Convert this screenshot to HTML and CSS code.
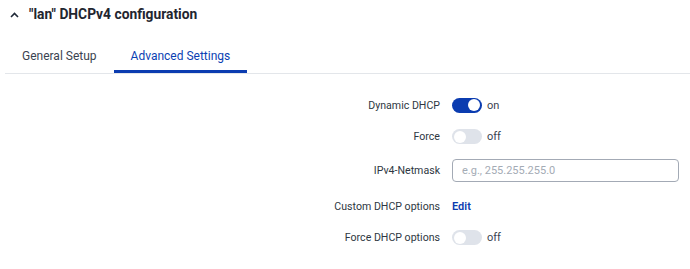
FILE: index.html
```html
<!DOCTYPE html>
<html>
<head>
<meta charset="utf-8">
<link rel="stylesheet" href="styles.css">
</head>
<body>
<div class="section">
  <div class="section-head">
    <svg class="caret" width="9" height="6" viewBox="0 0 9 6"><path d="M1 5 L4.5 1.5 L8 5" fill="none" stroke="#1f2937" stroke-width="1.6"/></svg>
    <span class="title">"lan" DHCPv4 configuration</span>
  </div>
  <div class="tabs">
    <div class="tab">General Setup</div>
    <div class="tab active">Advanced Settings</div>
  </div>
  <div class="form">
    <div class="row row-first">
      <div class="label">Dynamic DHCP</div>
      <div class="control"><span class="switch on"><span class="knob"></span></span><span class="state">on</span></div>
    </div>
    <div class="row">
      <div class="label">Force</div>
      <div class="control"><span class="switch"><span class="knob"></span></span><span class="state">off</span></div>
    </div>
    <div class="row row-input">
      <div class="label">IPv4-Netmask</div>
      <div class="control"><input class="text" type="text" placeholder="e.g., 255.255.255.0"></div>
    </div>
    <div class="row row-edit">
      <div class="label">Custom DHCP options</div>
      <div class="control"><a class="edit">Edit</a></div>
    </div>
    <div class="row">
      <div class="label">Force DHCP options</div>
      <div class="control"><span class="switch"><span class="knob"></span></span><span class="state">off</span></div>
    </div>
  </div>
</div>
</body>
</html>
```

FILE: styles.css
```css
html, body {
  margin: 0;
  padding: 0;
  background: #ffffff;
}
body {
  font-family: Roboto, "Noto Sans", sans-serif;
  color: #2b3440;
}
.section-head {
  display: flex;
  align-items: center;
  height: 28px;
  padding-left: 10px;
}
.caret {
  margin-right: 10px;
  margin-top: 1px;
}
.title {
  font-size: 13.8px;
  font-weight: 700;
  color: #1f2630;
}
.tabs {
  display: flex;
  margin-top: 17px;
  margin-left: 5px;
  border-bottom: 1px solid #e3e6ea;
}
.tab {
  padding: 4px 17px 7px;
  font-size: 12px;
  color: #3a4350;
  border-bottom: 3px solid transparent;
}
.tab.active {
  color: #0b3fb3;
  border-bottom-color: #0b3cb0;
}
.form {
  display: flex;
  flex-direction: column;
  padding-top: 15px;
}
.row {
  display: grid;
  grid-template-columns: 440px 1fr;
  column-gap: 12px;
  align-items: center;
  height: 31px;
  padding-right: 11px;
}
.row-first {
  height: 32px;
}
.row-input {
  height: 36px;
}
.row-edit {
  height: 32px;
  margin-top: 2px;
}
.label {
  text-align: right;
  font-size: 10.6px;
  color: #2e3742;
}
.control {
  display: flex;
  align-items: center;
}
.switch {
  position: relative;
  width: 30px;
  height: 15px;
  border-radius: 8px;
  background: #dfe3ea;
}
.switch .knob {
  position: absolute;
  top: 1.5px;
  left: 2px;
  width: 12px;
  height: 12px;
  border-radius: 50%;
  background: #ffffff;
}
.switch.on {
  background: #0b3cb0;
}
.switch.on .knob {
  left: 16px;
}
.state {
  margin-left: 5px;
  font-size: 11px;
  color: #3a4350;
}
.text {
  box-sizing: border-box;
  width: 100%;
  height: 23px;
  border: 1px solid #a3aab5;
  border-radius: 4px;
  padding: 0 9px;
  font-family: Roboto, "Noto Sans", sans-serif;
  font-size: 11px;
  color: #2e3742;
  outline: none;
}
.text::placeholder {
  color: #a4abb5;
}
.edit {
  font-size: 11px;
  font-weight: 600;
  color: #0b3cb0;
  cursor: pointer;
}
```
